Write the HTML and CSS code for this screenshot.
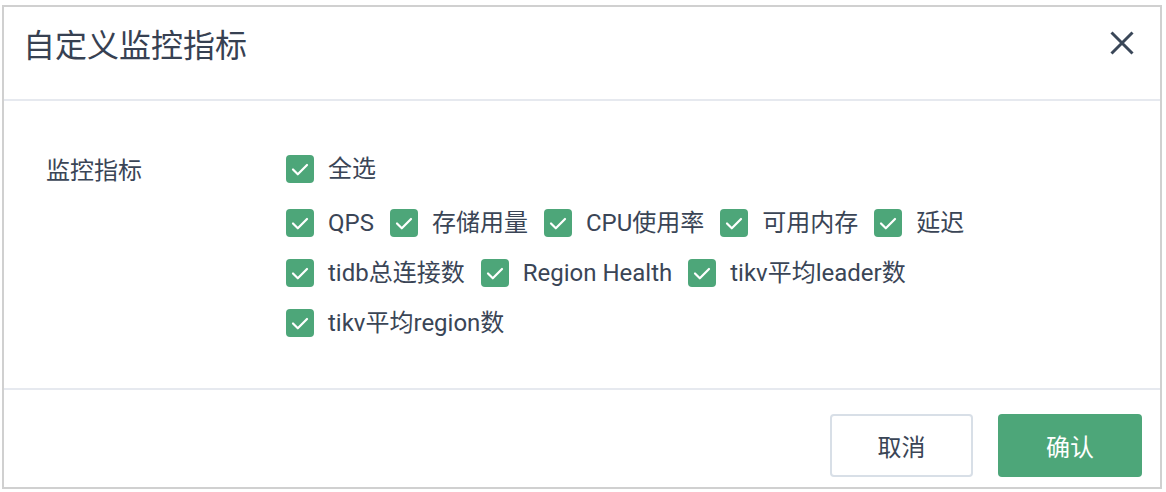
FILE: index.html
```html
<!DOCTYPE html>
<html lang="zh">
<head>
<meta charset="utf-8">
<title>自定义监控指标</title>
<link rel="stylesheet" href="styles.css">
</head>
<body>
<div class="modal">
  <div class="modal-header">
    <div class="modal-title">自定义监控指标</div>
    <button class="close-btn" aria-label="关闭">
      <svg width="24" height="24" viewBox="0 0 24 24"><path d="M1.5 1.5 L22.5 22.5 M22.5 1.5 L1.5 22.5" stroke="#3a4758" stroke-width="3" stroke-linecap="butt" fill="none"/></svg>
    </button>
  </div>
  <div class="modal-body">
    <div class="field-label">监控指标</div>
    <div class="field-control">
      <div class="check-all">
        <label class="check-item"><span class="box"><svg viewBox="0 0 28 28"><path d="M7 14.5 L11.8 19.3 L21 10" /></svg></span><span class="text">全选</span></label>
      </div>
      <div class="check-group">
        <label class="check-item"><span class="box"><svg viewBox="0 0 28 28"><path d="M7 14.5 L11.8 19.3 L21 10" /></svg></span><span class="text">QPS</span></label>
        <label class="check-item"><span class="box"><svg viewBox="0 0 28 28"><path d="M7 14.5 L11.8 19.3 L21 10" /></svg></span><span class="text">存储用量</span></label>
        <label class="check-item"><span class="box"><svg viewBox="0 0 28 28"><path d="M7 14.5 L11.8 19.3 L21 10" /></svg></span><span class="text">CPU使用率</span></label>
        <label class="check-item"><span class="box"><svg viewBox="0 0 28 28"><path d="M7 14.5 L11.8 19.3 L21 10" /></svg></span><span class="text">可用内存</span></label>
        <label class="check-item"><span class="box"><svg viewBox="0 0 28 28"><path d="M7 14.5 L11.8 19.3 L21 10" /></svg></span><span class="text">延迟</span></label>
        <label class="check-item"><span class="box"><svg viewBox="0 0 28 28"><path d="M7 14.5 L11.8 19.3 L21 10" /></svg></span><span class="text">tidb总连接数</span></label>
        <label class="check-item"><span class="box"><svg viewBox="0 0 28 28"><path d="M7 14.5 L11.8 19.3 L21 10" /></svg></span><span class="text">Region Health</span></label>
        <label class="check-item"><span class="box"><svg viewBox="0 0 28 28"><path d="M7 14.5 L11.8 19.3 L21 10" /></svg></span><span class="text">tikv平均leader数</span></label>
        <label class="check-item"><span class="box"><svg viewBox="0 0 28 28"><path d="M7 14.5 L11.8 19.3 L21 10" /></svg></span><span class="text">tikv平均region数</span></label>
      </div>
    </div>
  </div>
  <div class="modal-footer">
    <button class="btn btn-default">取消</button>
    <button class="btn btn-primary">确认</button>
  </div>
</div>
</body>
</html>
```

FILE: styles.css
```css
* { box-sizing: border-box; }
html, body { margin: 0; padding: 0; background: #ffffff; }
body {
  font-family: Roboto, "Noto Sans CJK SC", sans-serif;
  color: #3a4556;
}
.modal {
  margin: 5px 0 0 2px;
  width: 1160px;
  height: 484px;
  border: 2px solid #d0d0d0;
  display: flex;
  flex-direction: column;
  background: #fff;
}
.modal-header {
  height: 94px;
  border-bottom: 2px solid #e6e9ef;
  display: flex;
  align-items: flex-start;
  justify-content: space-between;
  padding: 16px 25px 0 19px;
}
.modal-title {
  font-size: 32px;
  line-height: 40px;
  color: #374152;
  font-family: "Noto Sans CJK SC", sans-serif;
}
.close-btn {
  border: 0;
  background: transparent;
  padding: 0;
  width: 26px;
  height: 40px;
  display: flex;
  align-items: center;
  justify-content: center;
  cursor: pointer;
}
.modal-body {
  flex: 1;
  display: flex;
  padding: 54px 0 0 42px;
}
.field-label {
  width: 240px;
  font-size: 24px;
  line-height: 28px;
  padding-top: 2px;
  color: #3a4556;
}
.field-control {
  display: flex;
  flex-direction: column;
}
.check-all {
  margin-bottom: 26px;
}
.check-group {
  width: 800px;
  display: flex;
  flex-wrap: wrap;
  row-gap: 22px;
}
.check-item {
  display: flex;
  align-items: center;
  gap: 14px;
  margin-right: 16px;
  height: 28px;
  font-size: 24px;
  line-height: 28px;
  color: #3a4556;
  white-space: nowrap;
}
.box {
  width: 28px;
  height: 28px;
  border-radius: 4px;
  background: #4da679;
  display: block;
  flex: none;
}
.box svg {
  width: 28px;
  height: 28px;
  display: block;
  fill: none;
  stroke: #ffffff;
  stroke-width: 2.2;
  stroke-linecap: round;
  stroke-linejoin: round;
}
.modal-footer {
  height: 99px;
  border-top: 2px solid #e6e9ef;
  display: flex;
  justify-content: flex-end;
  align-items: flex-start;
  gap: 25px;
  padding: 24px 18px 0 0;
}
.btn {
  height: 63px;
  width: 144px;
  border-radius: 4px;
  font-size: 24px;
  font-family: "Noto Sans CJK SC", sans-serif;
  cursor: pointer;
}
.btn-default {
  background: #fff;
  border: 2px solid #d8dfe7;
  color: #3a4556;
  width: 143px;
}
.btn-primary {
  background: #4da679;
  border: 0;
  color: #ffffff;
}
```
